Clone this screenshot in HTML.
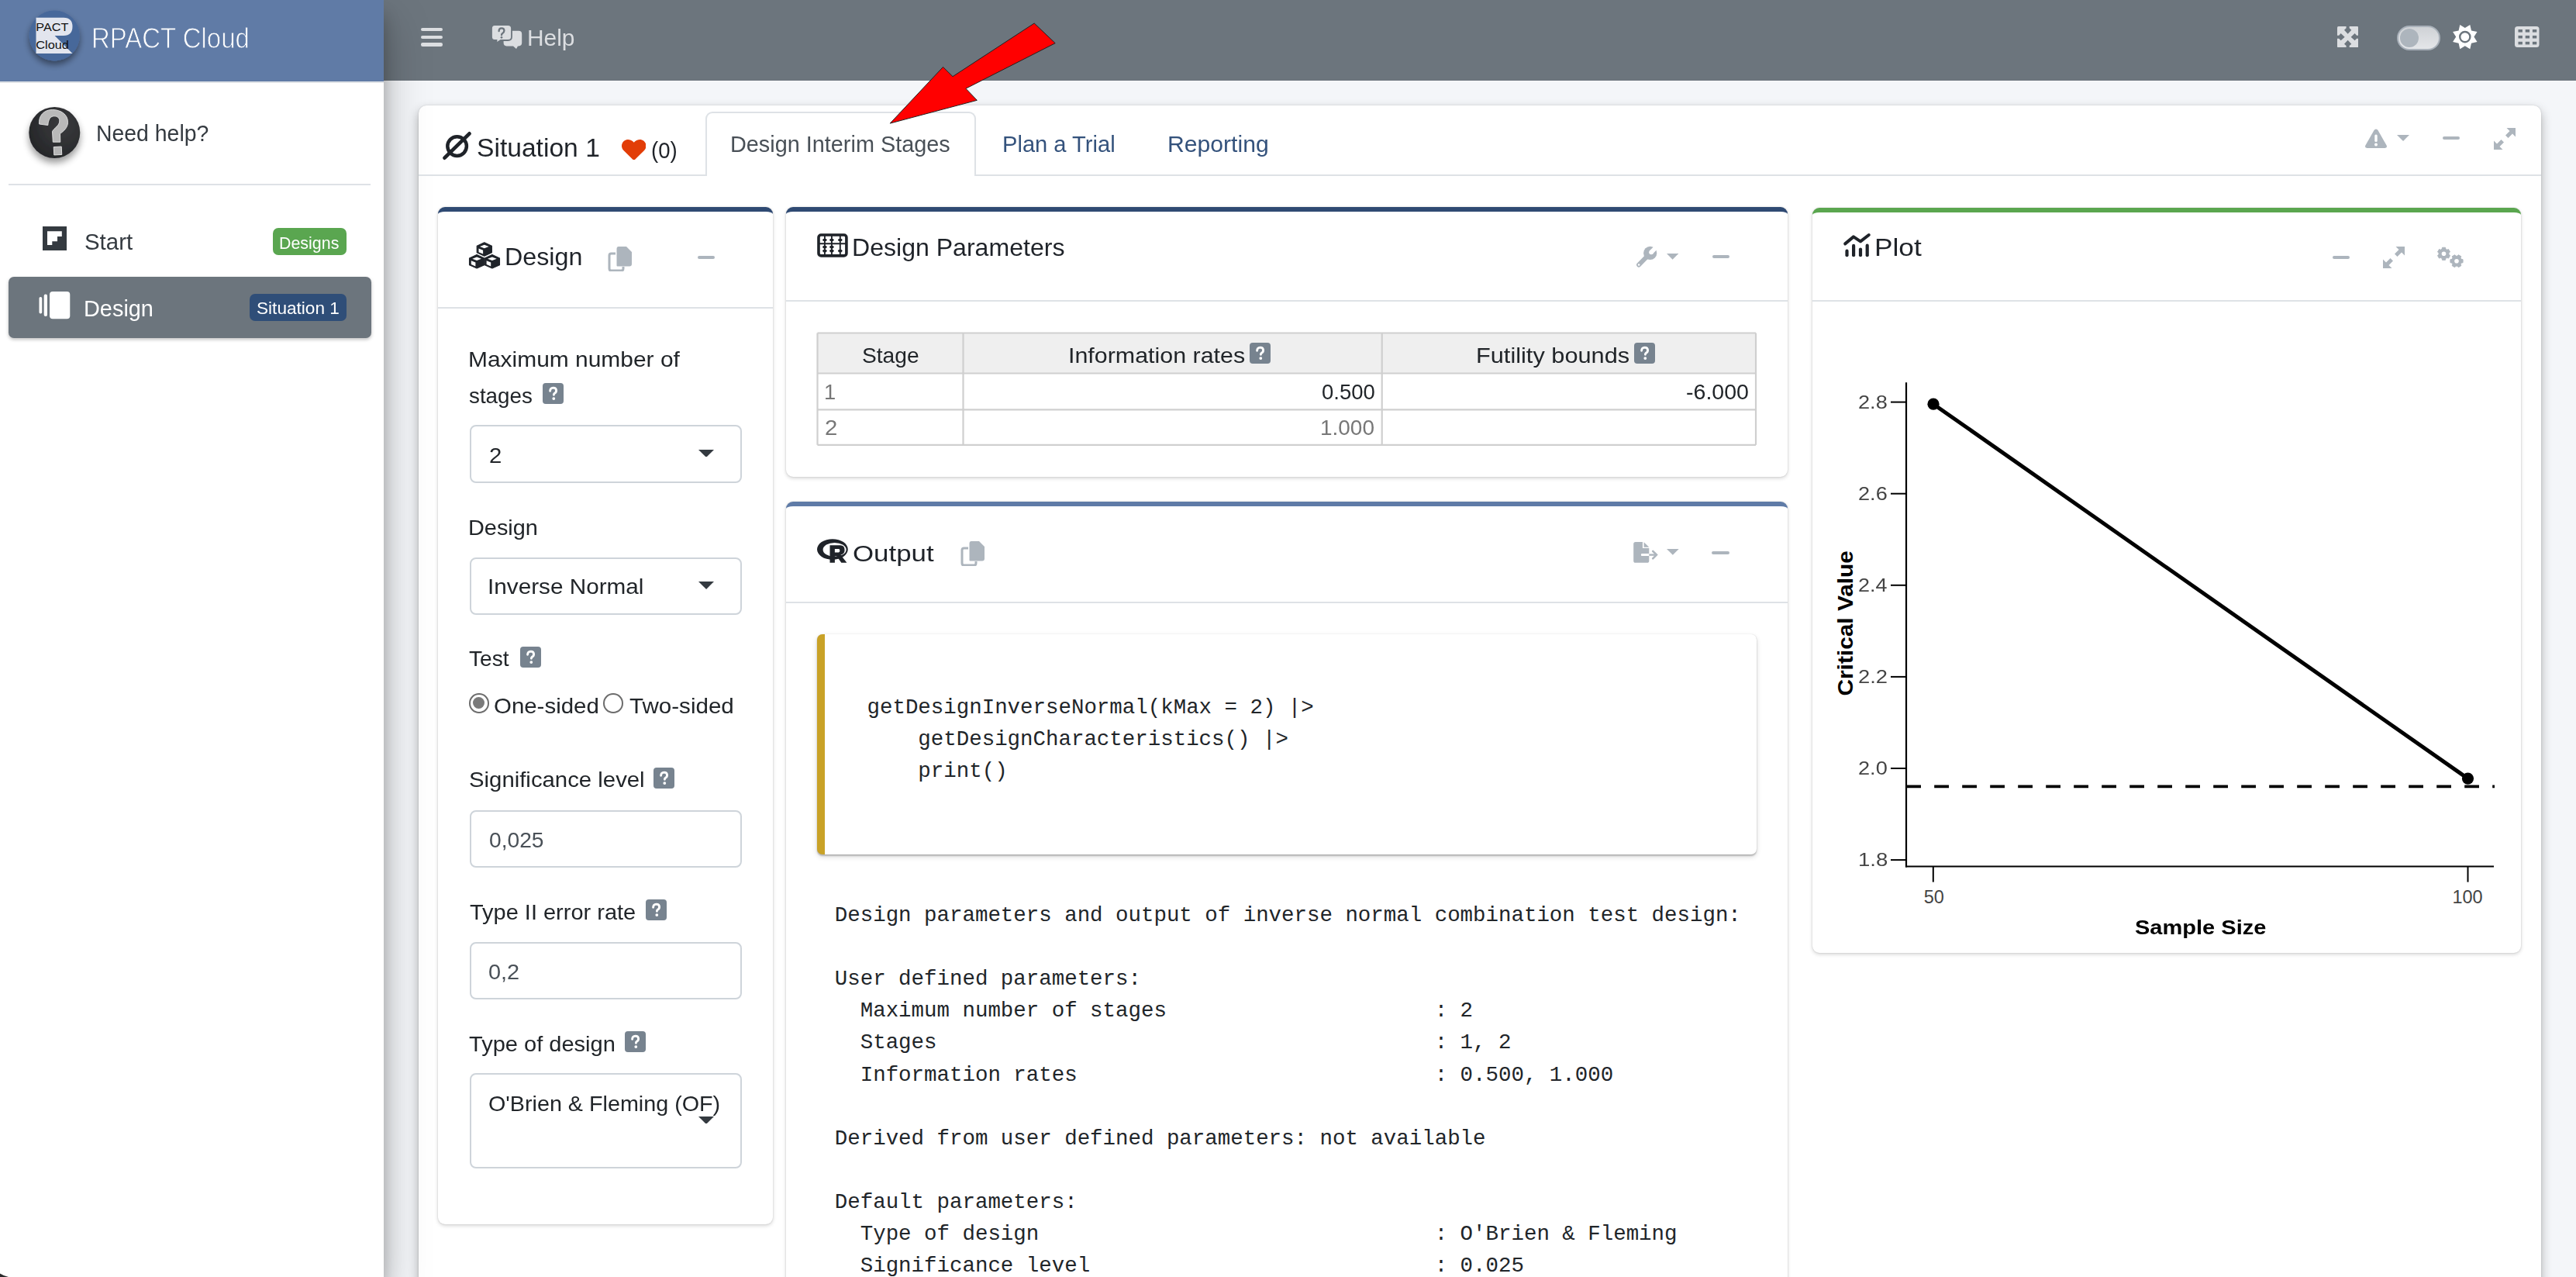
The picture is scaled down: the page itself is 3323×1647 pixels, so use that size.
<!DOCTYPE html>
<html><head><meta charset="utf-8"><title>RPACT Cloud</title>
<style>
html,body{margin:0;padding:0;width:3323px;height:1647px;overflow:hidden;background:#f4f6f9;font-family:"Liberation Sans",sans-serif;}
.t{position:absolute;white-space:pre;z-index:10;}
.a{position:absolute;z-index:5;}

</style></head><body>
<div class=a style="left:0;top:0;width:495px;height:1647px;background:#fff;box-shadow:0 28px 56px rgba(0,0,0,.25),0 20px 20px rgba(0,0,0,.22);z-index:2"></div>
<div class=a style="left:0;top:0;width:495px;height:104.8px;background:#607ba6;border-bottom:2.2px solid #dfe2e6;z-index:3"></div>
<div class=a style="left:495px;top:0;width:2828px;height:103.5px;background:#6c757d;border-bottom:1.5px solid #f7f8fa;z-index:1"></div>
<svg class=a style="left:0;top:0;z-index:4;overflow:visible" width="140" height="104">
<defs><filter id="ls" x="-50%" y="-50%" width="200%" height="200%"><feGaussianBlur in="SourceAlpha" stdDeviation="4"/><feOffset dy="5"/><feComponentTransfer><feFuncA type="linear" slope="0.45"/></feComponentTransfer><feMerge><feMergeNode/><feMergeNode in="SourceGraphic"/></feMerge></filter></defs>
<circle cx="70.2" cy="46" r="32.6" fill="#47679a" filter="url(#ls)"/>
<path d="M46.5,22.7 H82 Q93.5,22.7 93.5,34.3 Q93.5,46 82,46 H70.6 L93.5,69 H46.5 Z" fill="#e2e5ee"/>
<text x="46.3" y="39.9" font-family="Liberation Sans" font-size="15.2" fill="#111" textLength="42" lengthAdjust="spacingAndGlyphs">PACT</text>
<text x="46.3" y="62.7" font-family="Liberation Sans" font-size="15.2" fill="#111" textLength="42.5" lengthAdjust="spacingAndGlyphs">Cloud</text>
</svg>
<div class=t style="left:118.4px;top:31.6px;font-size:36.45px;line-height:36.45px;color:#ffffff;transform:scaleX(0.9039);transform-origin:left;z-index:4;-webkit-text-stroke:0.9px #607ba6;">RPACT Cloud</div>
<div class=a style="left:543px;top:35.8px;width:27.5px;height:4.4px;border-radius:2.2px;background:#dcdee1"></div>
<div class=a style="left:543px;top:45.5px;width:27.5px;height:4.4px;border-radius:2.2px;background:#dcdee1"></div>
<div class=a style="left:543px;top:55.3px;width:27.5px;height:4.4px;border-radius:2.2px;background:#dcdee1"></div>
<svg class=a style="left:630px;top:28px" width="48" height="40" viewBox="630 28 48 40">
<path d="M653,39.8 H669 Q673.2,39.8 673.2,44 V55.3 Q673.2,59.4 669,59.4 H668 L666,63 L662,59.4 H653.5 Q649.6,59.4 649.6,55.3 V44 Q649.6,39.8 653,39.8 Z" fill="#dcdee1"/>
<path d="M638,32 H655.5 Q660,32 660,36.5 V47.5 Q660,52 655.5,52 H646 L640,55.8 L640.5,52 H638 Q634,52 634,47.5 V36.5 Q634,32 638,32 Z" fill="#dcdee1" stroke="#6c757d" stroke-width="1.8"/>
<path d="M643.6,40.2 Q643.6,36.4 647,36.4 Q650.4,36.4 650.4,39.6 Q650.4,41.8 648.3,42.9 Q647,43.6 647,45.2" fill="none" stroke="#6c757d" stroke-width="2.3" stroke-linecap="round"/><circle cx="647" cy="48.3" r="1.35" fill="#6c757d"/>
</svg>
<div class=t style="left:679.6px;top:35.1px;font-size:29.00px;line-height:29.00px;color:#dcdee1;transform:scaleX(1.0308);transform-origin:left;">Help</div>
<svg class=a style="left:3015px;top:34px" width="27.3" height="27.4" viewBox="0 0 27.3 27.4">
<rect x="0" y="0" width="27.3" height="27.4" rx="1.6" fill="#dcdee1"/><polygon points="11.60,-1.00 11.60,2.30 9.00,4.70 13.65,9.70 18.30,4.70 15.70,2.30 15.70,-1.00" fill="#6c757d"/><polygon points="28.35,11.65 25.05,11.65 22.65,9.05 17.65,13.70 22.65,18.35 25.05,15.75 28.35,15.75" fill="#6c757d"/><polygon points="15.70,28.40 15.70,25.10 18.30,22.70 13.65,17.70 9.00,22.70 11.60,25.10 11.60,28.40" fill="#6c757d"/><polygon points="-1.05,15.75 2.25,15.75 4.65,18.35 9.65,13.70 4.65,9.05 2.25,11.65 -1.05,11.65" fill="#6c757d"/></svg>
<div class=a style="left:3092px;top:33px;width:56px;height:32px;border-radius:16px;background:linear-gradient(180deg,#cfd2d6,#e4e6e9);border:2px solid #a9b1ba;box-sizing:border-box"></div>
<div class=a style="left:3096px;top:37px;width:24px;height:24px;border-radius:12px;background:#adb5bd"></div>
<svg class=a style="left:0;top:0" width="3323" height="104" viewBox="0 0 3323 104" pointer-events="none">
<polygon points="3186.31,31.89 3188.00,39.40 3195.51,41.09 3191.40,47.60 3195.51,54.11 3188.00,55.80 3186.31,63.31 3179.80,59.20 3173.29,63.31 3171.60,55.80 3164.09,54.11 3168.20,47.60 3164.09,41.09 3171.60,39.40 3173.29,31.89 3179.80,36.00" fill="#ffffff"/>
<circle cx="3179.8" cy="47.6" r="6.6" fill="none" stroke="#6c757d" stroke-width="2.4"/>
</svg>
<svg class=a style="left:0;top:0" width="3323" height="104">
<rect x="3244" y="34" width="31.5" height="27" rx="3.5" fill="#dcdee1"/><rect x="3248.5" y="38.0" width="5.4" height="3.6" fill="#6c757d"/><rect x="3257.7" y="38.0" width="5.4" height="3.6" fill="#6c757d"/><rect x="3266.9" y="38.0" width="5.4" height="3.6" fill="#6c757d"/><rect x="3248.5" y="45.9" width="5.4" height="3.6" fill="#6c757d"/><rect x="3257.7" y="45.9" width="5.4" height="3.6" fill="#6c757d"/><rect x="3266.9" y="45.9" width="5.4" height="3.6" fill="#6c757d"/><rect x="3248.5" y="53.8" width="5.4" height="3.6" fill="#6c757d"/><rect x="3257.7" y="53.8" width="5.4" height="3.6" fill="#6c757d"/><rect x="3266.9" y="53.8" width="5.4" height="3.6" fill="#6c757d"/></svg>
<svg class=a style="left:20px;top:120px;z-index:3;overflow:visible" width="110" height="110" viewBox="20 120 110 110">
<defs><radialGradient id="hg" cx="0.65" cy="0.35" r="0.8"><stop offset="0" stop-color="#3a3b3e"/><stop offset="1" stop-color="#232426"/></radialGradient>
<filter id="hs" x="-50%" y="-50%" width="200%" height="200%"><feGaussianBlur in="SourceAlpha" stdDeviation="5"/><feOffset dy="6"/><feComponentTransfer><feFuncA type="linear" slope="0.4"/></feComponentTransfer><feMerge><feMergeNode/><feMergeNode in="SourceGraphic"/></feMerge></filter></defs>
<circle cx="70.3" cy="171" r="33" fill="url(#hg)" filter="url(#hs)"/>
<path d="M50.6,160 C49.5,150 56,141.5 67.5,141.5 C79,141.5 87.5,148 87.5,157.5 C87.5,165 82,169 77.5,172.5 L77.8,183.2 H68.3 L67.5,169.5 C70,165 76.8,162 76.8,156 C76.8,151.8 73.5,149.8 70,149.8 C65.5,149.8 62.5,153 61.8,161.5 Z" fill="#b9b9b9" stroke="#e4e4e4" stroke-width="0.9"/>
<rect x="69.5" y="189.3" width="10" height="10.4" fill="#b5b5b5" stroke="#e6e6e6" stroke-width="0.9" transform="rotate(-3 74.5 194.5)"/>
</svg>
<div class=t style="left:123.5px;top:157.1px;font-size:29.83px;line-height:29.83px;color:#343a40;transform:scaleX(0.9524);transform-origin:left;z-index:3;">Need help?</div>
<div class=a style="left:11px;top:237px;width:467px;height:2px;background:#dee2e6;z-index:3"></div>
<svg class=a style="left:55px;top:292px;z-index:3" width="31" height="31" viewBox="55 292 31 31">
<rect x="55" y="292" width="31" height="31" fill="#343a40"/>
<polygon points="61,298.3 79.8,298.3 79.8,305 74,305 74,311.3 67.3,311.3 67.3,316.1 61,316.1" fill="#fff"/></svg>
<div class=t style="left:108.8px;top:297.6px;font-size:29.00px;line-height:29.00px;color:#343a40;transform:scaleX(1.0143);transform-origin:left;z-index:3;">Start</div>
<div class=a style="left:352px;top:294px;width:95px;height:34.6px;border-radius:7px;background:#5aa650;z-index:3"></div>
<div class=t style="left:360.3px;top:302.6px;font-size:21.82px;line-height:21.82px;color:#fff;transform:scaleX(0.9814);transform-origin:left;z-index:3;">Designs</div>
<div class=a style="left:11px;top:357px;width:467.6px;height:78.7px;border-radius:7px;background:#6c757d;box-shadow:0 2px 4px rgba(0,0,0,.25);z-index:3"></div>
<svg class=a style="left:48px;top:374px;z-index:3" width="45" height="40" viewBox="48 374 45 40">
<rect x="50.5" y="383" width="3.7" height="21.5" rx="1.8" fill="#fff"/>
<rect x="56.7" y="379.5" width="4.3" height="28.5" rx="2" fill="#fff"/>
<rect x="64" y="376" width="26.3" height="35.3" rx="4" fill="#fff"/></svg>
<div class=t style="left:107.7px;top:382.0px;font-size:30.38px;line-height:30.38px;color:#fff;transform:scaleX(0.9511);transform-origin:left;z-index:3;">Design</div>
<div class=a style="left:322px;top:379px;width:125px;height:34.8px;border-radius:7px;background:#2f4e78;z-index:3"></div>
<div class=t style="left:331.1px;top:387.0px;font-size:22.09px;line-height:22.09px;color:#fff;transform:scaleX(1.0244);transform-origin:left;z-index:3;">Situation 1</div>
<svg class=a style="left:0;top:1630px;z-index:6" width="20" height="17"><path d="M0,12.6 Q4.5,15.6 11,17 H0 Z" fill="#2b2b2b"/></svg>
<div class=a style="left:540px;top:136px;width:2738px;height:1600px;border-radius:10px;background:#fff;box-shadow:0 0 2px rgba(0,0,0,.16),0 6px 14px rgba(0,0,0,.3);z-index:1"></div>
<div class=a style="left:540px;top:224.5px;width:2738px;height:2px;background:#dee2e6;z-index:2"></div>
<div class=a style="left:909.5px;top:144px;width:349px;height:83px;border:2px solid #dee2e6;border-bottom:none;border-radius:9px 9px 0 0;background:#fff;box-sizing:border-box;z-index:3"></div>
<svg class=a style="left:565px;top:165px;z-index:5" width="50" height="48" viewBox="565 165 50 48">
<circle cx="589.6" cy="188.6" r="12.3" fill="none" stroke="#1f2329" stroke-width="4.5"/>
<line x1="573.5" y1="203.6" x2="605.5" y2="172.4" stroke="#1f2329" stroke-width="4.8" stroke-linecap="round"/></svg>
<div class=t style="left:614.7px;top:174.3px;font-size:33.14px;line-height:33.14px;color:#1f2329;transform:scaleX(1.0146);transform-origin:left;">Situation 1</div>
<svg class=a style="left:801.9px;top:177.8px;z-index:5" width="31.5" height="27.8" viewBox="0 0 512 470" preserveAspectRatio="none">
<path d="M462.3,62.6 C407.5,15.9 326,24.3 275.7,76.2 L256,96.5 L236.3,76.2 C186.1,24.3 104.5,15.9 49.7,62.6 C-13.1,116.2 -16.4,212.4 39.8,270.5 L233.3,470.3 C245.8,483.2 266.1,483.2 278.6,470.3 L472.1,270.5 C528.4,212.4 525.1,116.2 462.3,62.6 Z" fill="#e23d07"/></svg>
<div class=t style="left:840.3px;top:178.1px;font-size:30.38px;line-height:30.38px;color:#1f2329;transform:scaleX(0.9082);transform-origin:left;">(0)</div>
<div class=t style="left:941.7px;top:171.1px;font-size:29.69px;line-height:29.69px;color:#495057;transform:scaleX(0.9713);transform-origin:left;">Design Interim Stages</div>
<div class=t style="left:1292.7px;top:171.1px;font-size:29.69px;line-height:29.69px;color:#34527c;transform:scaleX(0.9805);transform-origin:left;">Plan a Trial</div>
<div class=t style="left:1505.6px;top:171.1px;font-size:29.69px;line-height:29.69px;color:#34527c;transform:scaleX(1.0154);transform-origin:left;">Reporting</div>
<svg class=a style="left:3050px;top:165px;z-index:5" width="30" height="28" viewBox="0 0 30 28">
<path d="M15,1.5 Q16.6,1.5 17.5,3 L28.6,22.5 Q30,25.5 26.5,26 H3.5 Q0,25.5 1.4,22.5 L12.5,3 Q13.4,1.5 15,1.5 Z" fill="#adb5bd"/>
<rect x="13.3" y="8.5" width="3.4" height="9.5" rx="1.5" fill="#fff"/><circle cx="15" cy="21.6" r="2" fill="#fff"/></svg>
<svg class=a style="left:3091.5px;top:173.8px;z-index:6" width="16.09999999999991" height="7.899999999999977" viewBox="0 0 16.09999999999991 7.899999999999977"><polygon points="0,0 16.09999999999991,0 8.049999999999955,7.899999999999977" fill="#adb5bd"/></svg>
<div class=a style="left:3150.6px;top:176px;width:22.40000000000009px;height:4px;border-radius:2px;background:#adb5bd;z-index:6"></div>
<svg class=a style="left:3217px;top:164.8px;z-index:6" width="28" height="28" viewBox="0 0 28 28">
<path d="M16.5,0 H28 V11.5 L24,7.5 L18.5,13 L15,9.5 L20.5,4 Z" fill="#adb5bd"/>
<path d="M11.5,28 H0 V16.5 L4,20.5 L9.5,15 L13,18.5 L7.5,24 Z" fill="#adb5bd"/>
</svg>
<svg class=a style="left:1140px;top:25px;z-index:20" width="230" height="140" viewBox="1140 25 230 140">
<polygon points="1148.2,159.1 1216.5,86.4 1229,98.7 1334.2,30 1361.2,55.7 1245.9,114.2 1260.3,129.3" fill="#ff0000" stroke="#222" stroke-width="1" stroke-linejoin="miter"/></svg>
<div class=a style="left:565px;top:267px;width:432px;height:1312px;border-radius:9px;background:#fff;border-top:6px solid #2f4a73;box-sizing:border-box;box-shadow:0 0 2px rgba(0,0,0,.16),0 2px 5px rgba(0,0,0,.16);z-index:4"></div>
<div class=a style="left:565px;top:396px;width:432px;height:2px;background:#dee2e6"></div>
<svg class=a style="left:600px;top:306px" width="50" height="45" viewBox="600 306 50 45"><polygon points="624.8,312.8 634.4,317.15000000000003 634.4,325.85 624.8,330.2 615.1999999999999,325.85 615.1999999999999,317.15000000000003" fill="#1f2329" stroke="#1f2329" stroke-width="1.1" stroke-linejoin="round"/><polygon points="624.8,315.7 630.5999999999999,318.0 624.8,320.3 619.0,318.0" fill="#fff"/><polygon points="617.5,320.40000000000003 623.0999999999999,322.7 623.0999999999999,327.6 617.5,325.2" fill="#fff"/><polygon points="615.1,328.6 624.7,332.95000000000005 624.7,341.65000000000003 615.1,346.0 605.5,341.65000000000003 605.5,332.95000000000005" fill="#1f2329" stroke="#1f2329" stroke-width="1.1" stroke-linejoin="round"/><polygon points="615.1,331.5 620.9,333.8 615.1,336.1 609.3000000000001,333.8" fill="#fff"/><polygon points="607.8000000000001,336.20000000000005 613.4,338.5 613.4,343.40000000000003 607.8000000000001,341.0" fill="#fff"/><polygon points="634.9,328.6 644.5,332.95000000000005 644.5,341.65000000000003 634.9,346.0 625.3,341.65000000000003 625.3,332.95000000000005" fill="#1f2329" stroke="#1f2329" stroke-width="1.1" stroke-linejoin="round"/><polygon points="634.9,331.5 640.6999999999999,333.8 634.9,336.1 629.1,333.8" fill="#fff"/><polygon points="627.6,336.20000000000005 633.1999999999999,338.5 633.1999999999999,343.40000000000003 627.6,341.0" fill="#fff"/></svg>
<div class=t style="left:651.0px;top:316.4px;font-size:31.76px;line-height:31.76px;color:#1f2329;transform:scaleX(1.0155);transform-origin:left;">Design</div>
<svg class=a style="left:784px;top:318px;z-index:6" width="32" height="32" viewBox="0 0 32 32">
<path d="M10,9 H4.5 Q2,9 2,11.5 V28.5 Q2,31 4.5,31 H17.5 Q20,31 20,28.5 V26" fill="none" stroke="#adb5bd" stroke-width="3"/>
<path d="M12.5,0 H24 L31,7 V22.5 Q31,25.5 28,25.5 H12.5 Q11.5,25.5 11.5,24.5 V3 Q11.5,0 14,0 Z" fill="#adb5bd"/>
</svg>
<div class=a style="left:900px;top:329.5px;width:22px;height:4px;border-radius:2px;background:#adb5bd;z-index:6"></div>
<div class=t style="left:604.0px;top:448.7px;font-size:28.31px;line-height:28.31px;color:#212529;transform:scaleX(1.0580);transform-origin:left;">Maximum number of</div>
<div class=t style="left:605.4px;top:495.5px;font-size:28.31px;line-height:28.31px;color:#212529;transform:scaleX(0.9819);transform-origin:left;">stages</div>
<div class=a style="left:700px;top:494px;width:27px;height:27px;border-radius:4px;background:#77838f;z-index:6"></div>
<svg class=a style="left:700px;top:494px;z-index:7" width="27" height="27" viewBox="0 0 27 27"><path d="M9.6,10.2 Q9.8,6.2 13.6,6.1 Q17.6,6.2 17.6,9.7 Q17.6,12.2 15.2,13.4 Q14.4,13.9 14.4,15.3" fill="none" stroke="#fff" stroke-width="2.9" stroke-linecap="round" stroke-linejoin="round"/><circle cx="14.3" cy="20.1" r="1.9" fill="#fff"/></svg>
<div class=a style="left:605.6px;top:548.4px;width:351.4px;height:74.9px;border:2px solid #ced4da;border-radius:8px;box-sizing:border-box;background:#fff"></div>
<div class=t style="left:630.5px;top:572.7px;font-size:28.31px;line-height:28.31px;color:#212529;transform:scaleX(1.0368);transform-origin:left;">2</div>
<svg class=a style="left:900.7px;top:579.6px;z-index:6" width="20.09999999999991" height="9.899999999999977" viewBox="0 0 20.09999999999991 9.899999999999977"><polygon points="0,0 20.09999999999991,0 10.049999999999955,9.899999999999977" fill="#343a40"/></svg>
<div class=t style="left:603.7px;top:666.2px;font-size:28.31px;line-height:28.31px;color:#212529;transform:scaleX(1.0207);transform-origin:left;">Design</div>
<div class=a style="left:605.6px;top:718.7px;width:351.4px;height:74.2px;border:2px solid #ced4da;border-radius:8px;box-sizing:border-box;background:#fff"></div>
<div class=t style="left:629.3px;top:742.3px;font-size:28.31px;line-height:28.31px;color:#212529;transform:scaleX(1.0501);transform-origin:left;">Inverse Normal</div>
<svg class=a style="left:900.7px;top:750px;z-index:6" width="20.09999999999991" height="10" viewBox="0 0 20.09999999999991 10"><polygon points="0,0 20.09999999999991,0 10.049999999999955,10" fill="#343a40"/></svg>
<div class=t style="left:605.4px;top:835.3px;font-size:28.31px;line-height:28.31px;color:#212529;transform:scaleX(0.9920);transform-origin:left;">Test</div>
<div class=a style="left:671px;top:834px;width:27px;height:27px;border-radius:4px;background:#77838f;z-index:6"></div>
<svg class=a style="left:671px;top:834px;z-index:7" width="27" height="27" viewBox="0 0 27 27"><path d="M9.6,10.2 Q9.8,6.2 13.6,6.1 Q17.6,6.2 17.6,9.7 Q17.6,12.2 15.2,13.4 Q14.4,13.9 14.4,15.3" fill="none" stroke="#fff" stroke-width="2.9" stroke-linecap="round" stroke-linejoin="round"/><circle cx="14.3" cy="20.1" r="1.9" fill="#fff"/></svg>
<div class=a style="left:605px;top:894px;width:25.6px;height:25.6px;border-radius:50%;border:2px solid #6d6d6d;box-sizing:border-box;background:#fff"></div>
<div class=a style="left:610.3px;top:899.3px;width:15px;height:15px;border-radius:50%;background:#7a7a7a"></div>
<div class=t style="left:636.8px;top:896.3px;font-size:28.31px;line-height:28.31px;color:#212529;transform:scaleX(1.0400);transform-origin:left;">One-sided</div>
<div class=a style="left:778px;top:894px;width:25.6px;height:25.6px;border-radius:50%;border:2px solid #6d6d6d;box-sizing:border-box;background:#fff"></div>
<div class=t style="left:811.8px;top:896.3px;font-size:28.31px;line-height:28.31px;color:#212529;transform:scaleX(1.0453);transform-origin:left;">Two-sided</div>
<div class=t style="left:604.8px;top:991.4px;font-size:28.31px;line-height:28.31px;color:#212529;transform:scaleX(1.0365);transform-origin:left;">Significance level</div>
<div class=a style="left:843px;top:990px;width:27px;height:27px;border-radius:4px;background:#77838f;z-index:6"></div>
<svg class=a style="left:843px;top:990px;z-index:7" width="27" height="27" viewBox="0 0 27 27"><path d="M9.6,10.2 Q9.8,6.2 13.6,6.1 Q17.6,6.2 17.6,9.7 Q17.6,12.2 15.2,13.4 Q14.4,13.9 14.4,15.3" fill="none" stroke="#fff" stroke-width="2.9" stroke-linecap="round" stroke-linejoin="round"/><circle cx="14.3" cy="20.1" r="1.9" fill="#fff"/></svg>
<div class=a style="left:605.6px;top:1044.7px;width:351.4px;height:74.7px;border:2px solid #ced4da;border-radius:8px;box-sizing:border-box;background:#fff"></div>
<div class=t style="left:630.8px;top:1068.7px;font-size:28.31px;line-height:28.31px;color:#495057;transform:scaleX(0.9962);transform-origin:left;">0,025</div>
<div class=t style="left:605.8px;top:1162.4px;font-size:28.31px;line-height:28.31px;color:#212529;transform:scaleX(1.0239);transform-origin:left;">Type II error rate</div>
<div class=a style="left:832.5px;top:1160px;width:27px;height:27px;border-radius:4px;background:#77838f;z-index:6"></div>
<svg class=a style="left:832.5px;top:1160px;z-index:7" width="27" height="27" viewBox="0 0 27 27"><path d="M9.6,10.2 Q9.8,6.2 13.6,6.1 Q17.6,6.2 17.6,9.7 Q17.6,12.2 15.2,13.4 Q14.4,13.9 14.4,15.3" fill="none" stroke="#fff" stroke-width="2.9" stroke-linecap="round" stroke-linejoin="round"/><circle cx="14.3" cy="20.1" r="1.9" fill="#fff"/></svg>
<div class=a style="left:605.6px;top:1214.8px;width:351.4px;height:74.6px;border:2px solid #ced4da;border-radius:8px;box-sizing:border-box;background:#fff"></div>
<div class=t style="left:630.1px;top:1239.4px;font-size:28.31px;line-height:28.31px;color:#495057;transform:scaleX(1.0217);transform-origin:left;">0,2</div>
<div class=t style="left:605.4px;top:1331.5px;font-size:28.31px;line-height:28.31px;color:#212529;transform:scaleX(1.0260);transform-origin:left;">Type of design</div>
<div class=a style="left:806px;top:1330px;width:27px;height:27px;border-radius:4px;background:#77838f;z-index:6"></div>
<svg class=a style="left:806px;top:1330px;z-index:7" width="27" height="27" viewBox="0 0 27 27"><path d="M9.6,10.2 Q9.8,6.2 13.6,6.1 Q17.6,6.2 17.6,9.7 Q17.6,12.2 15.2,13.4 Q14.4,13.9 14.4,15.3" fill="none" stroke="#fff" stroke-width="2.9" stroke-linecap="round" stroke-linejoin="round"/><circle cx="14.3" cy="20.1" r="1.9" fill="#fff"/></svg>
<div class=a style="left:605.6px;top:1384px;width:351.4px;height:122.9px;border:2px solid #ced4da;border-radius:8px;box-sizing:border-box;background:#fff"></div>
<div class=t style="left:629.9px;top:1408.7px;font-size:28.31px;line-height:28.31px;color:#212529;transform:scaleX(1.0151);transform-origin:left;">O'Brien &amp; Fleming (OF)</div>
<svg class=a style="left:901px;top:1439.6px;z-index:6" width="20" height="9.900000000000091" viewBox="0 0 20 9.900000000000091"><polygon points="0,0 20,0 10.0,9.900000000000091" fill="#343a40"/></svg>
<div class=a style="left:1014px;top:267px;width:1292px;height:348px;border-radius:9px;background:#fff;border-top:6px solid #2f4a73;box-sizing:border-box;box-shadow:0 0 2px rgba(0,0,0,.16),0 2px 5px rgba(0,0,0,.16);z-index:4"></div>
<div class=a style="left:1014px;top:387px;width:1292px;height:2px;background:#dee2e6"></div>
<svg class=a style="left:1050px;top:298px" width="48" height="38" viewBox="1050 298 48 38">
<rect x="1056" y="303" width="35.9" height="26.9" rx="3.2" fill="#fff" stroke="#1f2329" stroke-width="3.6"/>
<line x1="1063.9" y1="304" x2="1063.9" y2="329" stroke="#1f2329" stroke-width="1.9"/><line x1="1072.9" y1="304" x2="1072.9" y2="329" stroke="#1f2329" stroke-width="1.9"/><line x1="1083.8" y1="304" x2="1083.8" y2="329" stroke="#1f2329" stroke-width="1.9"/><line x1="1057" y1="314.2" x2="1091" y2="314.2" stroke="#1f2329" stroke-width="1.9"/>
<polygon points="1060.9,309.5 1062.1000000000001,307.9 1065.7,307.9 1066.9,309.5 1065.7,311.1 1062.1000000000001,311.1" fill="#1f2329"/><polygon points="1069.9,309.5 1071.1000000000001,307.9 1074.7,307.9 1075.9,309.5 1074.7,311.1 1071.1000000000001,311.1" fill="#1f2329"/><polygon points="1080.8,309.5 1082.0,307.9 1085.6,307.9 1086.8,309.5 1085.6,311.1 1082.0,311.1" fill="#1f2329"/><polygon points="1060.9,318.6 1062.1000000000001,317.0 1065.7,317.0 1066.9,318.6 1065.7,320.20000000000005 1062.1000000000001,320.20000000000005" fill="#1f2329"/><polygon points="1069.9,318.6 1071.1000000000001,317.0 1074.7,317.0 1075.9,318.6 1074.7,320.20000000000005 1071.1000000000001,320.20000000000005" fill="#1f2329"/><polygon points="1060.9,323.6 1062.1000000000001,322.0 1065.7,322.0 1066.9,323.6 1065.7,325.20000000000005 1062.1000000000001,325.20000000000005" fill="#1f2329"/><polygon points="1069.9,323.6 1071.1000000000001,322.0 1074.7,322.0 1075.9,323.6 1074.7,325.20000000000005 1071.1000000000001,325.20000000000005" fill="#1f2329"/><polygon points="1080.8,323.6 1082.0,322.0 1085.6,322.0 1086.8,323.6 1085.6,325.20000000000005 1082.0,325.20000000000005" fill="#1f2329"/></svg>
<div class=t style="left:1099.4px;top:303.6px;font-size:31.76px;line-height:31.76px;color:#1f2329;transform:scaleX(1.0099);transform-origin:left;">Design Parameters</div>
<svg class=a style="left:2100px;top:300px" width="50" height="50" viewBox="0 0 50 50">
<line x1="14" y1="41.6" x2="26" y2="29.4" stroke="#adb5bd" stroke-width="5.8" stroke-linecap="round"/>
<circle cx="28.7" cy="26.4" r="8.6" fill="#adb5bd"/>
<circle cx="30.1" cy="25.3" r="2.9" fill="#fff"/>
<polygon points="32.15,27.35 28.05,23.25 36.55,14.75 40.65,18.85" fill="#fff"/>
<circle cx="14.1" cy="41.4" r="1.25" fill="#fff"/></svg>
<svg class=a style="left:2150.3px;top:327px;z-index:6" width="15.199999999999818" height="7.800000000000011" viewBox="0 0 15.199999999999818 7.800000000000011"><polygon points="0,0 15.199999999999818,0 7.599999999999909,7.800000000000011" fill="#adb5bd"/></svg>
<div class=a style="left:2209px;top:329px;width:21.5px;height:4px;border-radius:2px;background:#adb5bd;z-index:6"></div>
<div class=a style="left:1054.5px;top:429.5px;width:1210.5px;height:144.3px;background:#fff"></div>
<div class=a style="left:1054.5px;top:429.5px;width:1210.5px;height:52px;background:#efefef"></div>
<svg class=a style="left:0;top:0;z-index:6" width="2400" height="600"><line x1="1054.5" y1="429.5" x2="2265" y2="429.5" stroke="#cfcfcf" stroke-width="2.2"/><line x1="1054.5" y1="481.5" x2="2265" y2="481.5" stroke="#cfcfcf" stroke-width="2.2"/><line x1="1054.5" y1="528.3" x2="2265" y2="528.3" stroke="#cfcfcf" stroke-width="2.2"/><line x1="1054.5" y1="573.8" x2="2265" y2="573.8" stroke="#cfcfcf" stroke-width="2.2"/><line x1="1054.5" y1="429.5" x2="1054.5" y2="573.8" stroke="#cfcfcf" stroke-width="2.2"/><line x1="1242.5" y1="429.5" x2="1242.5" y2="573.8" stroke="#cfcfcf" stroke-width="2.2"/><line x1="1782.7" y1="429.5" x2="1782.7" y2="573.8" stroke="#cfcfcf" stroke-width="2.2"/><line x1="2265" y1="429.5" x2="2265" y2="573.8" stroke="#cfcfcf" stroke-width="2.2"/></svg>
<div class=t style="left:1111.9px;top:443.7px;font-size:28.31px;line-height:28.31px;color:#212529;transform:scaleX(0.9956);transform-origin:left;">Stage</div>
<div class=t style="left:1378.3px;top:443.7px;font-size:28.31px;line-height:28.31px;color:#212529;transform:scaleX(1.0746);transform-origin:left;">Information rates</div>
<div class=a style="left:1612px;top:442px;width:27px;height:27px;border-radius:4px;background:#77838f;z-index:6"></div>
<svg class=a style="left:1612px;top:442px;z-index:7" width="27" height="27" viewBox="0 0 27 27"><path d="M9.6,10.2 Q9.8,6.2 13.6,6.1 Q17.6,6.2 17.6,9.7 Q17.6,12.2 15.2,13.4 Q14.4,13.9 14.4,15.3" fill="none" stroke="#fff" stroke-width="2.9" stroke-linecap="round" stroke-linejoin="round"/><circle cx="14.3" cy="20.1" r="1.9" fill="#fff"/></svg>
<div class=t style="left:1904.3px;top:443.7px;font-size:28.31px;line-height:28.31px;color:#212529;transform:scaleX(1.0858);transform-origin:left;">Futility bounds</div>
<div class=a style="left:2108px;top:442px;width:27px;height:27px;border-radius:4px;background:#77838f;z-index:6"></div>
<svg class=a style="left:2108px;top:442px;z-index:7" width="27" height="27" viewBox="0 0 27 27"><path d="M9.6,10.2 Q9.8,6.2 13.6,6.1 Q17.6,6.2 17.6,9.7 Q17.6,12.2 15.2,13.4 Q14.4,13.9 14.4,15.3" fill="none" stroke="#fff" stroke-width="2.9" stroke-linecap="round" stroke-linejoin="round"/><circle cx="14.3" cy="20.1" r="1.9" fill="#fff"/></svg>
<div class=t style="left:1063.1px;top:491.0px;font-size:28.31px;line-height:28.31px;color:#777;transform:scaleX(0.9635);transform-origin:left;">1</div>
<div class=t style="left:1063.5px;top:537.1px;font-size:28.31px;line-height:28.31px;color:#777;transform:scaleX(1.0368);transform-origin:left;">2</div>
<div class=t style="left:1704.5px;top:491.0px;font-size:28.31px;line-height:28.31px;color:#212529;transform:scaleX(0.9715);transform-origin:left;">0.500</div>
<div class=t style="left:1703.3px;top:537.1px;font-size:28.31px;line-height:28.31px;color:#777;transform:scaleX(0.9877);transform-origin:left;">1.000</div>
<div class=t style="left:2174.9px;top:491.0px;font-size:28.31px;line-height:28.31px;color:#212529;transform:scaleX(1.0089);transform-origin:left;">-6.000</div>
<div class=a style="left:1013.5px;top:647px;width:1292.5px;height:1100px;border-radius:9px;background:#fff;border-top:6px solid #5f7ba7;box-sizing:border-box;box-shadow:0 0 2px rgba(0,0,0,.16),0 2px 5px rgba(0,0,0,.16);z-index:4"></div>
<div class=a style="left:1013.5px;top:775.6px;width:1292.5px;height:2px;background:#dee2e6"></div>
<svg class=a style="left:1050px;top:690px" width="48" height="40" viewBox="1050 690 48 40">
<path fill-rule="evenodd" fill="#1f2329" d="M1054,708.5 A19.9,13.3 0 1 0 1093.8,708.5 A19.9,13.3 0 1 0 1054,708.5 Z M1061.6,708.9 A15,9 0 1 0 1091.6,708.9 A15,9 0 1 0 1061.6,708.9 Z"/>
<path fill="#1f2329" d="M1070.5,703.2 H1084 Q1089.6,703.2 1089.6,709.6 Q1089.6,714.5 1084.5,715.8 L1092.4,725.7 H1085.3 L1079.5,717.6 H1076.9 V725.7 H1070.5 Z"/>
<path fill="#fff" d="M1076.9,707.9 H1081.8 Q1083.4,707.9 1083.4,710.1 Q1083.4,712.4 1081.8,712.4 H1076.9 Z"/>
</svg>
<div class=t style="left:1100.3px;top:698.0px;font-size:30.38px;line-height:30.38px;color:#1f2329;transform:scaleX(1.1472);transform-origin:left;">Output</div>
<svg class=a style="left:1238.7px;top:698px;z-index:6" width="32" height="32" viewBox="0 0 32 32">
<path d="M10,9 H4.5 Q2,9 2,11.5 V28.5 Q2,31 4.5,31 H17.5 Q20,31 20,28.5 V26" fill="none" stroke="#adb5bd" stroke-width="3"/>
<path d="M12.5,0 H24 L31,7 V22.5 Q31,25.5 28,25.5 H12.5 Q11.5,25.5 11.5,24.5 V3 Q11.5,0 14,0 Z" fill="#adb5bd"/>
</svg>
<svg class=a style="left:2095px;top:685px" width="60" height="50" viewBox="2095 685 60 50">
<path d="M2109.8,699 H2118.9 V707.1 H2127.3 V714.1 H2117.8 Q2116.9,714.1 2116.9,715.6 Q2116.9,717.1 2117.8,717.1 H2127.3 V723.2 Q2127.3,725.8 2124.7,725.8 H2109.8 Q2107.2,725.8 2107.2,723.2 V701.6 Q2107.2,699 2109.8,699 Z" fill="#adb5bd"/>
<polygon points="2120.6,699.2 2127.3,705.8 2120.6,705.8" fill="#adb5bd"/>
<rect x="2127.3" y="714.4" width="8.2" height="2.4" fill="#adb5bd"/>
<polyline points="2132.2,710.9 2136.9,715.6 2132.2,720.3" fill="none" stroke="#adb5bd" stroke-width="2.6" stroke-linecap="round"/>
</svg>
<svg class=a style="left:2150px;top:708px;z-index:6" width="15.699999999999818" height="7.7999999999999545" viewBox="0 0 15.699999999999818 7.7999999999999545"><polygon points="0,0 15.699999999999818,0 7.849999999999909,7.7999999999999545" fill="#adb5bd"/></svg>
<div class=a style="left:2208px;top:710.5px;width:23.40000000000009px;height:4px;border-radius:2px;background:#adb5bd;z-index:6"></div>
<div class=a style="left:1053.7px;top:818px;width:1212.3px;height:284.2px;border-radius:7px;background:#fff;border-left:10.5px solid #c9a227;box-sizing:border-box;box-shadow:0 1.5px 2px rgba(0,0,0,.22),0 3px 7px rgba(0,0,0,.14),0 0 1px rgba(0,0,0,.1)"></div>
<div class=t style="left:1118.5px;top:898.8px;font-size:27.45px;line-height:27.45px;color:#212529;font-family:'Liberation Mono',monospace;">getDesignInverseNormal(kMax = 2) |&gt;</div>
<div class=t style="left:1118.5px;top:940.0px;font-size:27.45px;line-height:27.45px;color:#212529;font-family:'Liberation Mono',monospace;">    getDesignCharacteristics() |&gt;</div>
<div class=t style="left:1118.5px;top:981.3px;font-size:27.45px;line-height:27.45px;color:#212529;font-family:'Liberation Mono',monospace;">    print()</div>
<div class=t style="left:1076.8px;top:1167.0px;font-size:27.45px;line-height:27.45px;color:#212529;font-family:'Liberation Mono',monospace;">Design parameters and output of inverse normal combination test design:</div>
<div class=t style="left:1076.8px;top:1249.2px;font-size:27.45px;line-height:27.45px;color:#212529;font-family:'Liberation Mono',monospace;">User defined parameters:</div>
<div class=t style="left:1076.8px;top:1290.3px;font-size:27.45px;line-height:27.45px;color:#212529;font-family:'Liberation Mono',monospace;">  Maximum number of stages                     : 2</div>
<div class=t style="left:1076.8px;top:1331.4px;font-size:27.45px;line-height:27.45px;color:#212529;font-family:'Liberation Mono',monospace;">  Stages                                       : 1, 2</div>
<div class=t style="left:1076.8px;top:1372.5px;font-size:27.45px;line-height:27.45px;color:#212529;font-family:'Liberation Mono',monospace;">  Information rates                            : 0.500, 1.000</div>
<div class=t style="left:1076.8px;top:1454.7px;font-size:27.45px;line-height:27.45px;color:#212529;font-family:'Liberation Mono',monospace;">Derived from user defined parameters: not available</div>
<div class=t style="left:1076.8px;top:1536.9px;font-size:27.45px;line-height:27.45px;color:#212529;font-family:'Liberation Mono',monospace;">Default parameters:</div>
<div class=t style="left:1076.8px;top:1578.0px;font-size:27.45px;line-height:27.45px;color:#212529;font-family:'Liberation Mono',monospace;">  Type of design                               : O'Brien &amp; Fleming</div>
<div class=t style="left:1076.8px;top:1619.1px;font-size:27.45px;line-height:27.45px;color:#212529;font-family:'Liberation Mono',monospace;">  Significance level                           : 0.025</div>
<div class=a style="left:2337.5px;top:267.5px;width:914.5px;height:961.3px;border-radius:9px;background:#fff;border-top:6px solid #5aa64f;box-sizing:border-box;box-shadow:0 0 2px rgba(0,0,0,.16),0 2px 5px rgba(0,0,0,.16);z-index:4"></div>
<div class=a style="left:2337.5px;top:386.5px;width:914.5px;height:2px;background:#dee2e6"></div>
<svg class=a style="left:2375px;top:298px" width="42" height="38" viewBox="2375 298 42 38">
<g stroke="#1f2329" stroke-width="4.2" stroke-linecap="round" fill="none">
<line x1="2382.5" y1="323.7" x2="2382.5" y2="329.2"/>
<line x1="2391.1" y1="316.9" x2="2391.1" y2="329.2"/>
<line x1="2400" y1="321.6" x2="2400" y2="329.2"/>
<line x1="2408.7" y1="316.7" x2="2408.7" y2="329.2"/>
<polyline points="2380.2,314.4 2391,305.4 2400,311.4 2410.8,303" stroke-width="4" stroke-linejoin="round"/>
</g></svg>
<div class=t style="left:2418.2px;top:303.6px;font-size:31.76px;line-height:31.76px;color:#1f2329;transform:scaleX(1.1100);transform-origin:left;">Plot</div>
<div class=a style="left:3009px;top:329.8px;width:21.59999999999991px;height:4px;border-radius:2px;background:#adb5bd;z-index:6"></div>
<svg class=a style="left:3073.5px;top:317.5px;z-index:6" width="28" height="28" viewBox="0 0 28 28">
<path d="M16.5,0 H28 V11.5 L24,7.5 L18.5,13 L15,9.5 L20.5,4 Z" fill="#adb5bd"/>
<path d="M11.5,28 H0 V16.5 L4,20.5 L9.5,15 L13,18.5 L7.5,24 Z" fill="#adb5bd"/>
</svg>
<svg class=a style="left:3140px;top:314px" width="42" height="34" viewBox="3140 314 42 34"><polygon points="3150.49,319.25 3154.51,319.25 3154.83,321.23 3156.59,322.25 3158.47,321.53 3160.48,325.01 3158.92,326.28 3158.92,328.32 3160.48,329.59 3158.47,333.07 3156.59,332.35 3154.83,333.37 3154.51,335.35 3150.49,335.35 3150.17,333.37 3148.41,332.35 3146.53,333.07 3144.52,329.59 3146.08,328.32 3146.08,326.28 3144.52,325.01 3146.53,321.53 3148.41,322.25 3150.17,321.23" fill="#adb5bd" stroke="#adb5bd" stroke-width="1" stroke-linejoin="round"/><circle cx="3152.5" cy="327.3" r="2.8" fill="#fff"/><polygon points="3177.05,334.69 3177.05,338.71 3175.07,339.03 3174.05,340.79 3174.77,342.67 3171.29,344.68 3170.02,343.12 3167.98,343.12 3166.71,344.68 3163.23,342.67 3163.95,340.79 3162.93,339.03 3160.95,338.71 3160.95,334.69 3162.93,334.37 3163.95,332.61 3163.23,330.73 3166.71,328.72 3167.98,330.28 3170.02,330.28 3171.29,328.72 3174.77,330.73 3174.05,332.61 3175.07,334.37" fill="#adb5bd" stroke="#adb5bd" stroke-width="1" stroke-linejoin="round"/><circle cx="3169" cy="336.7" r="2.8" fill="#fff"/></svg>
<svg class=a style="left:0;top:0;z-index:6" width="3323" height="1300"><line x1="2459" y1="493.3" x2="2459" y2="1118.5" stroke="#000" stroke-width="2.2"/><line x1="2458" y1="1117.5" x2="3217" y2="1117.5" stroke="#000" stroke-width="2.2"/><line x1="2439" y1="518.6" x2="2459" y2="518.6" stroke="#000" stroke-width="2"/><line x1="2439" y1="636.7" x2="2459" y2="636.7" stroke="#000" stroke-width="2"/><line x1="2439" y1="754.8" x2="2459" y2="754.8" stroke="#000" stroke-width="2"/><line x1="2439" y1="872.9" x2="2459" y2="872.9" stroke="#000" stroke-width="2"/><line x1="2439" y1="991.0" x2="2459" y2="991.0" stroke="#000" stroke-width="2"/><line x1="2439" y1="1109.1" x2="2459" y2="1109.1" stroke="#000" stroke-width="2"/><line x1="2493.8" y1="1117.5" x2="2493.8" y2="1137.6" stroke="#000" stroke-width="2"/><line x1="3183.5" y1="1117.5" x2="3183.5" y2="1137.6" stroke="#000" stroke-width="2"/><line x1="2459.2" y1="1014.4" x2="3218" y2="1014.4" stroke="#000" stroke-width="3.9" stroke-dasharray="18.8 17.2"/><line x1="2494" y1="521.2" x2="3183.5" y2="1004.1" stroke="#000" stroke-width="5"/><circle cx="2494" cy="521.2" r="7.6" fill="#000"/><circle cx="3183.5" cy="1004.1" r="7.6" fill="#000"/></svg>
<div class=t style="left:2397.2px;top:507.8px;font-size:23.47px;line-height:23.47px;color:#444;transform:scaleX(1.1565);transform-origin:left;">2.8</div>
<div class=t style="left:2397.2px;top:625.9px;font-size:23.47px;line-height:23.47px;color:#444;transform:scaleX(1.1565);transform-origin:left;">2.6</div>
<div class=t style="left:2397.3px;top:744.0px;font-size:23.47px;line-height:23.47px;color:#444;transform:scaleX(1.1477);transform-origin:left;">2.4</div>
<div class=t style="left:2397.2px;top:862.1px;font-size:23.47px;line-height:23.47px;color:#444;transform:scaleX(1.1654);transform-origin:left;">2.2</div>
<div class=t style="left:2397.2px;top:980.2px;font-size:23.47px;line-height:23.47px;color:#444;transform:scaleX(1.1565);transform-origin:left;">2.0</div>
<div class=t style="left:2396.7px;top:1098.3px;font-size:23.47px;line-height:23.47px;color:#444;transform:scaleX(1.1745);transform-origin:left;">1.8</div>
<div class=t style="left:2481.7px;top:1145.8px;font-size:23.47px;line-height:23.47px;color:#444;">50</div>
<div class=t style="left:3163.5px;top:1145.8px;font-size:23.47px;line-height:23.47px;color:#444;">100</div>
<div class=t style="left:2754.0px;top:1182.9px;font-size:26.24px;line-height:26.24px;color:#000;font-weight:700;transform:scaleX(1.1060);transform-origin:left;">Sample Size</div>
<div class=t style="left:2293.5px;top:790.2px;font-size:27.62px;line-height:27.62px;color:#000;font-weight:700;transform:rotate(-90deg) scaleX(1.0814);transform-origin:center;">Critical Value</div>
</body></html>
